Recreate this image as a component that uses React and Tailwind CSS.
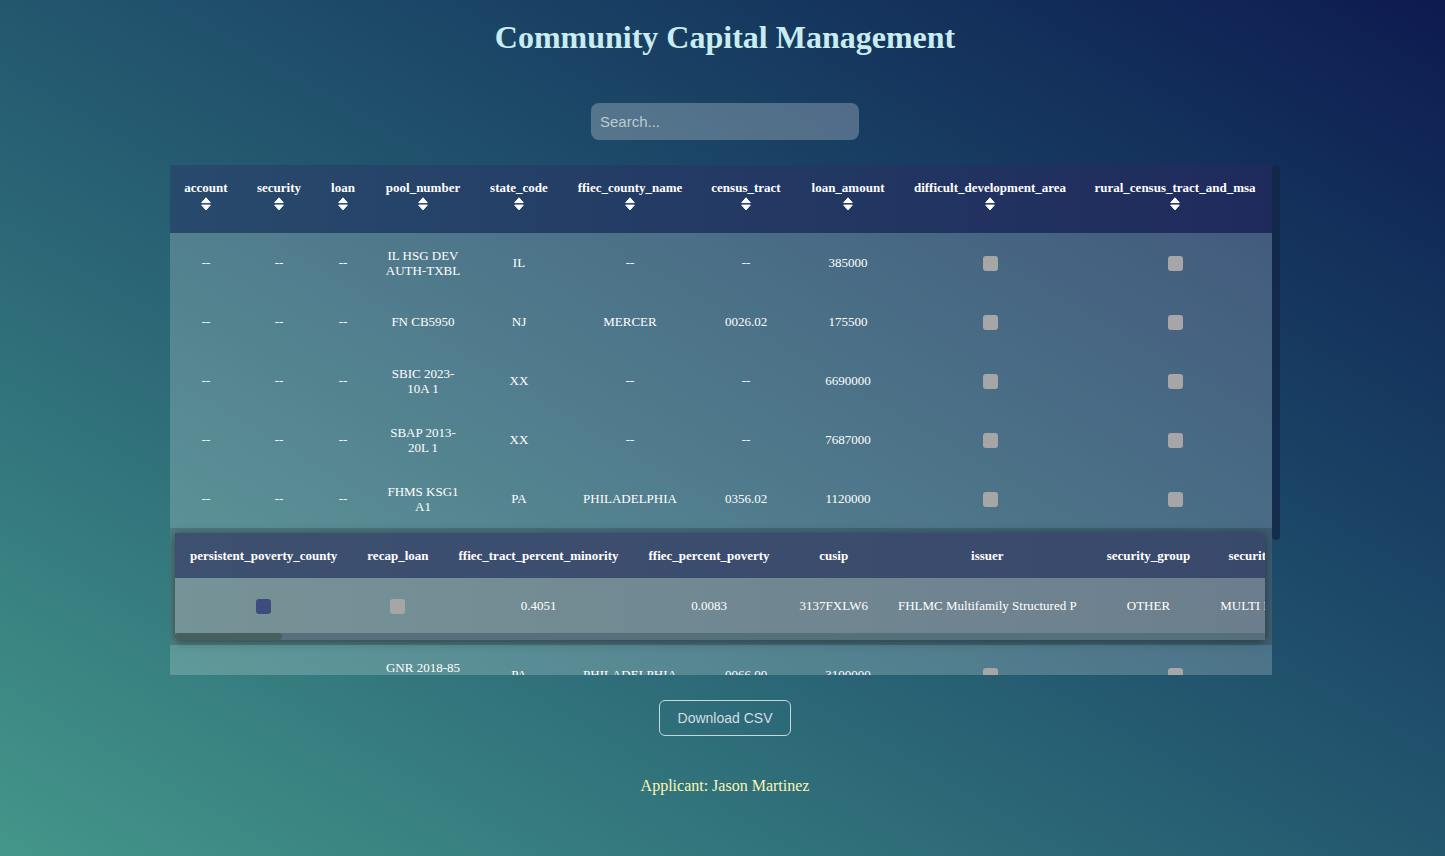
import React from 'react';

const rows = [
  { pool: 'IL HSG DEV AUTH-TXBL', state: 'IL', county: '--', tract: '--', amount: '385000' },
  { pool: 'FN CB5950', state: 'NJ', county: 'MERCER', tract: '0026.02', amount: '175500' },
  { pool: 'SBIC 2023-10A 1', state: 'XX', county: '--', tract: '--', amount: '6690000' },
  { pool: 'SBAP 2013-20L 1', state: 'XX', county: '--', tract: '--', amount: '7687000' },
  { pool: 'FHMS KSG1 A1', state: 'PA', county: 'PHILADELPHIA', tract: '0356.02', amount: '1120000', expanded: true },
  { pool: 'GNR 2018-85 LM', state: 'PA', county: 'PHILADELPHIA', tract: '0066.00', amount: '3100000' },
  { pool: 'FN BM5731', state: 'NJ', county: 'ESSEX', tract: '0101.00', amount: '2450000' },
  { pool: 'FHMS K142 A2', state: 'NY', county: 'KINGS', tract: '0512.00', amount: '5300000' },
];

const headers = [
  'account',
  'security',
  'loan',
  'pool_number',
  'state_code',
  'ffiec_county_name',
  'census_tract',
  'loan_amount',
  'difficult_development_area',
  'rural_census_tract_and_msa',
];

// detail fields of the expanded row
const details = [
  { name: 'persistent_poverty_county', box: 'on' },
  { name: 'recap_loan', box: 'off' },
  { name: 'ffiec_tract_percent_minority', value: '0.4051' },
  { name: 'ffiec_percent_poverty', value: '0.0083' },
  { name: 'cusip', value: '3137FXLW6' },
  { name: 'issuer', value: 'FHLMC Multifamily Structured P' },
  { name: 'security_group', value: 'OTHER' },
  { name: 'security_type', value: 'MULTI FAMILY' },
  { name: 'security_description', value: 'FHMS KSG1 A1' },
  { name: 'coupon', value: '2.9740' },
  { name: 'maturity_date', value: '2029-06-25' },
];

function SortIcon() {
  return (
    <svg width="10" height="14" viewBox="0 0 10 14" className="block">
      <path d="M5 0.8 L9.3 5.6 H0.7 Z" fill="white" stroke="white" strokeWidth="1" strokeLinejoin="round" />
      <path d="M0.7 8.1 H9.3 L5 12.9 Z" fill="white" stroke="white" strokeWidth="1" strokeLinejoin="round" />
    </svg>
  );
}

function Box({ checked }) {
  return (
    <span
      className={
        'inline-block align-middle w-[15px] h-[15px] rounded-[3px] ' +
        (checked ? 'bg-[#3e4c7d]' : 'bg-[#a6a6a6]')
      }
    />
  );
}

function DetailRow() {
  return (
    <tr className="bg-white/20">
      <td colSpan={10} className="bg-black/15 pt-[5px] pb-[5px] pl-[5px] pr-[7px]">
        <div className="bg-linear-to-r from-[#769397] to-[#6c7e8d] shadow-[0_2px_10px_rgba(0,0,0,0.45)]">
          <div className="overflow-hidden">
            <table className="w-max border-collapse text-[13px]">
              <thead>
                <tr className="bg-[#1f2d5a]/65">
                  {details.map((d) => (
                    <th key={d.name} className="h-[45px] px-[15px] whitespace-nowrap font-bold text-white">
                      {d.name}
                    </th>
                  ))}
                </tr>
              </thead>
              <tbody>
                <tr>
                  {details.map((d) => (
                    <td key={d.name} className="h-[55px] px-[15px] whitespace-nowrap text-center text-white">
                      {d.box ? <Box checked={d.box === 'on'} /> : d.value}
                    </td>
                  ))}
                </tr>
              </tbody>
            </table>
          </div>
          {/* horizontal scrollbar */}
          <div className="h-[7px] bg-[#55707a]">
            <div className="h-full w-[107px] rounded-full bg-[#465f60]" />
          </div>
        </div>
      </td>
    </tr>
  );
}

export default function App() {
  return (
    <div className="min-h-screen bg-linear-to-tr from-[#44968a] to-[#0e1a50] pl-[5px] font-['Liberation_Serif','Times_New_Roman',serif]">
      <div className="flex flex-col items-center">
        <h1 className="mt-[19px] text-[32px] leading-[37px] font-bold text-[#c8ecef]">
          Community Capital Management
        </h1>

        <input
          type="text"
          placeholder="Search..."
          className="mt-[47px] w-[268px] h-[37px] rounded-lg bg-white/25 px-[9px] text-[15px] text-white placeholder:text-[#bccbd0] outline-none font-['Liberation_Sans',Arial,sans-serif]"
        />

        <div className="mt-[25px] flex w-[1110px]">
          <div className="w-[1102px] max-h-[510px] overflow-hidden">
            <table className="w-full table-fixed border-collapse text-[13px] leading-[15px] text-white">
              <colgroup>
                <col className="w-[72px]" />
                <col className="w-[74px]" />
                <col className="w-[54px]" />
                <col className="w-[106px]" />
                <col className="w-[86px]" />
                <col className="w-[136px]" />
                <col className="w-[96px]" />
                <col className="w-[108px]" />
                <col className="w-[176px]" />
                <col className="w-[194px]" />
              </colgroup>
              <thead className="bg-linear-to-r from-[#284a6c] to-[#1f2a5c]">
                <tr>
                  {headers.map((h) => (
                    <th key={h} className="h-[68px] align-top pt-[15px] px-0 font-bold whitespace-nowrap">
                      <div className="leading-[15px]">{h}</div>
                      <div className="mt-[2px] flex justify-center">
                        <SortIcon />
                      </div>
                    </th>
                  ))}
                </tr>
              </thead>
              <tbody>
                {rows.map((r) => (
                  <React.Fragment key={r.pool}>
                    <tr className="bg-white/20 text-center">
                      <td className="h-[59px] px-[15px]">--</td>
                      <td className="h-[59px] px-[15px]">--</td>
                      <td className="h-[59px] px-[15px]">--</td>
                      <td className="h-[59px] px-[15px]">{r.pool}</td>
                      <td className="h-[59px] px-[15px]">{r.state}</td>
                      <td className="h-[59px] px-[15px]">{r.county}</td>
                      <td className="h-[59px] px-[15px]">{r.tract}</td>
                      <td className="h-[59px] px-[15px]">{r.amount}</td>
                      <td className="h-[59px] px-[15px]">
                        <Box />
                      </td>
                      <td className="h-[59px] px-[15px]">
                        <Box />
                      </td>
                    </tr>
                    {r.expanded && <DetailRow />}
                  </React.Fragment>
                ))}
              </tbody>
            </table>
          </div>
          {/* vertical scrollbar */}
          <div className="w-2">
            <div className="h-[375px] w-full rounded-full bg-[#132747]/80" />
          </div>
        </div>

        <button className="mt-[25px] w-[132px] h-[36px] rounded-md border border-[#c9d6da] text-[14px] text-[#d3dee1] font-['Liberation_Sans',Arial,sans-serif]">
          Download CSV
        </button>

        <p className="mt-[41px] text-[16px] leading-[18px] text-[#fdf5b6]">Applicant: Jason Martinez</p>
      </div>
    </div>
  );
}
